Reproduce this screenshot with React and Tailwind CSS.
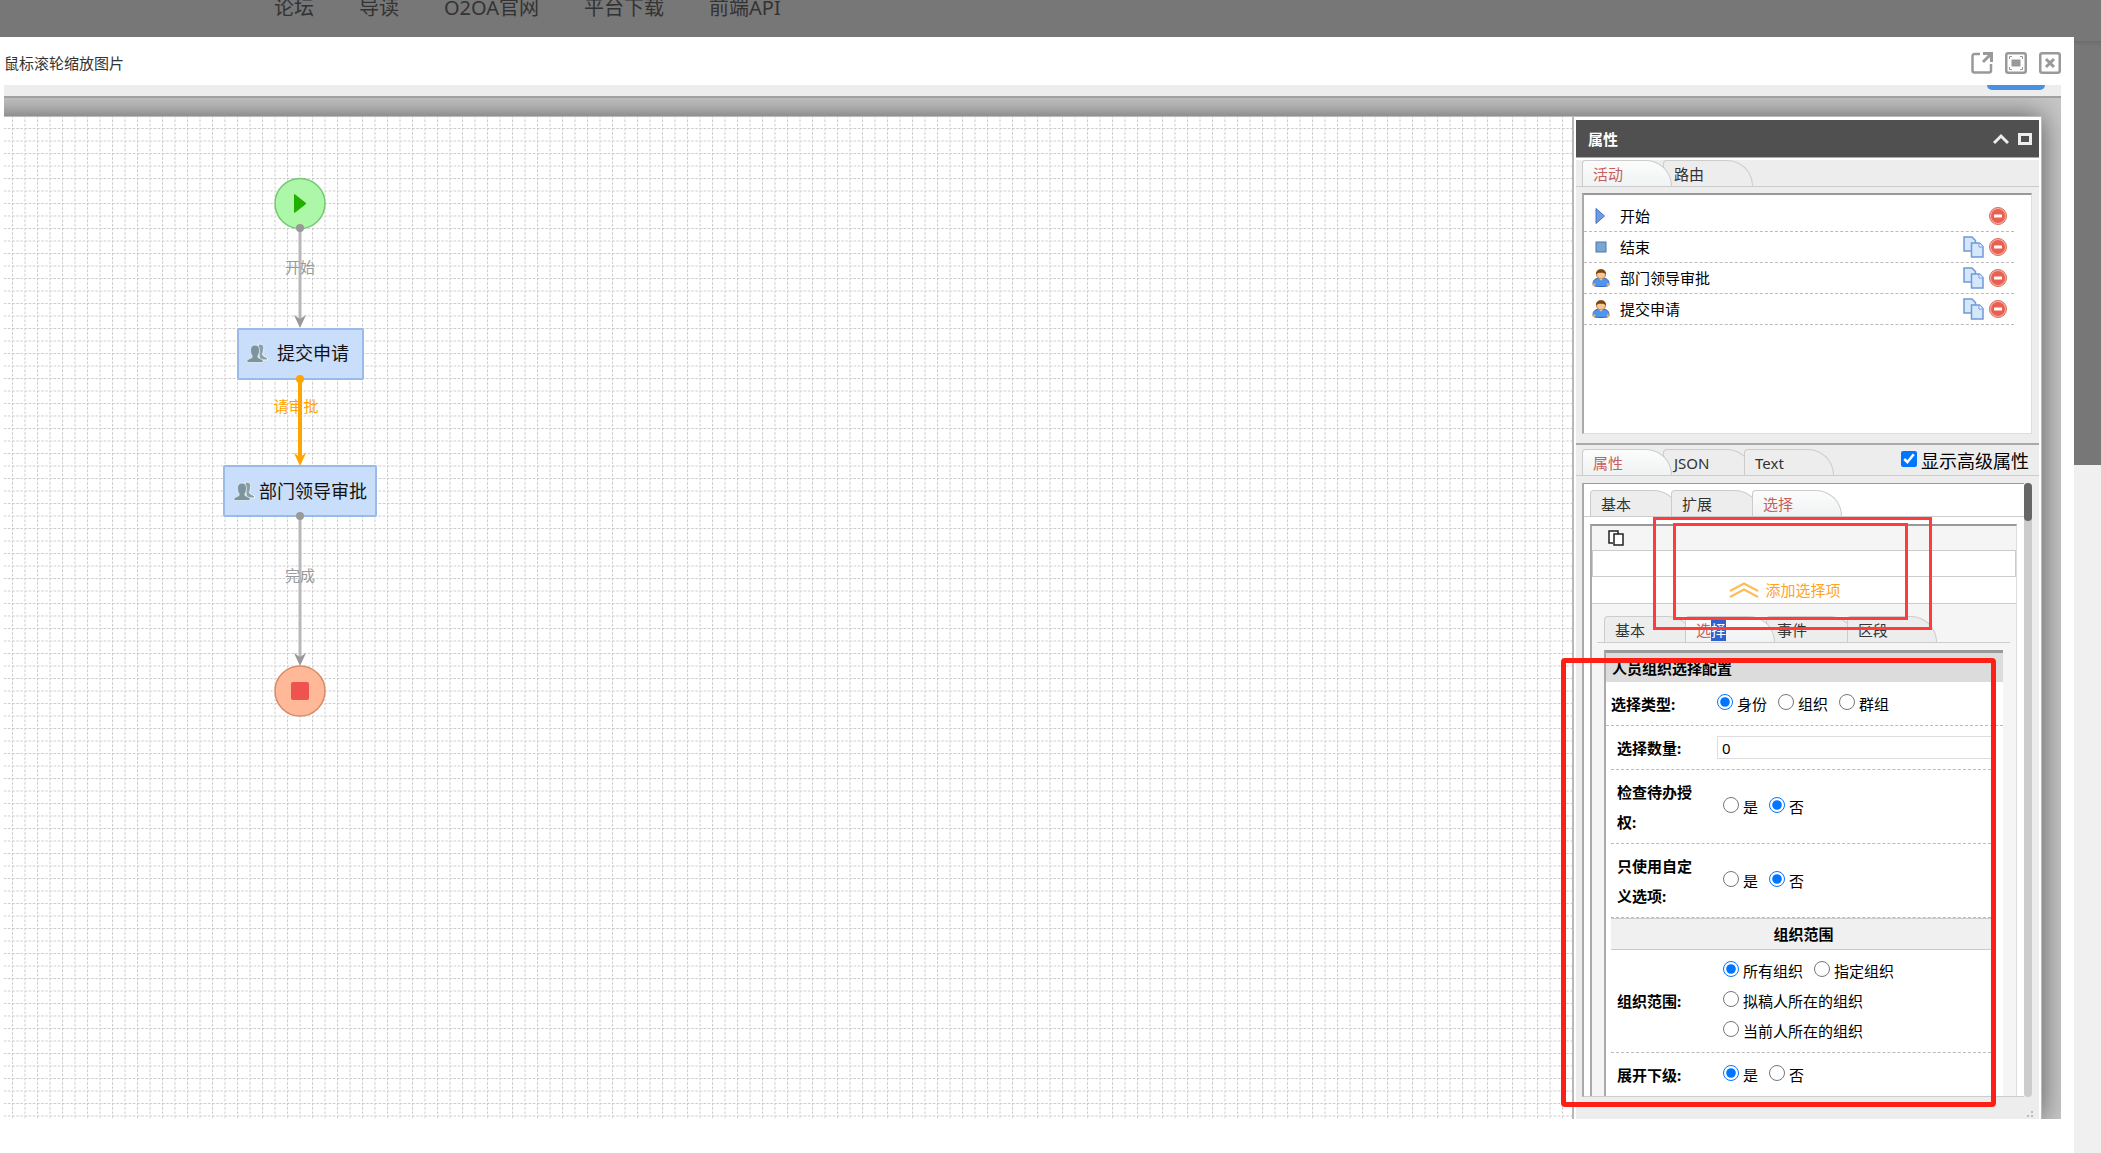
import { useState } from 'react';
import clsx from 'clsx';

const NAV_LINKS = ['论坛', '导读', 'O2OA官网', '平台下载', '前端API'];

const ACTIVITIES = [
  { name: '开始', type: 'begin', copy: false },
  { name: '结束', type: 'end', copy: true },
  { name: '部门领导审批', type: 'manual', copy: true },
  { name: '提交申请', type: 'manual', copy: true },
];

/* ---------- icons ---------- */

function OpenIcon() {
  return (
    <svg width="22" height="22" viewBox="0 0 22 22" fill="none" stroke="#999" strokeWidth="2.500">
      <path d="M9 2H3.500a2 2 0 0 0-2 2v14.500a2 2 0 0 0 2 2H18a2 2 0 0 0 2-2V12" />
      <path d="M12 1.500h8.500V10M20 2l-8 8" strokeWidth="3" />
    </svg>
  );
}

function FullIcon() {
  return (
    <svg width="22" height="22" viewBox="0 0 22 22" fill="none" stroke="#999">
      <rect x="1.250" y="1.250" width="19.500" height="19.500" rx="2" strokeWidth="2.500" />
      <path d="M4.500 7V4.500H7M15 4.500h2.500V7M17.500 15v2.500H15M7 17.500H4.500V15" />
      <rect x="6.500" y="7.500" width="9" height="7" fill="#999" stroke="none" />
    </svg>
  );
}

function CloseIcon() {
  return (
    <svg width="22" height="22" viewBox="0 0 22 22" fill="none" stroke="#999">
      <rect x="1.250" y="1.250" width="19.500" height="19.500" rx="2" strokeWidth="2.500" />
      <path d="M7 7l8 8M15 7l-8 8" strokeWidth="3" />
    </svg>
  );
}

function ActivityIcon({ type }) {
  if (type === 'begin') {
    return (
      <svg width="18" height="18" viewBox="0 0 18 18">
        <path d="M4 1.500L12.500 9L4 16.500Z" fill="#6f9be4" stroke="#3f6fc4" />
      </svg>
    );
  }
  if (type === 'end') {
    return (
      <svg width="18" height="18" viewBox="0 0 18 18">
        <rect x="4" y="4" width="10" height="10" fill="#7ba5d2" stroke="#4a78ac" />
      </svg>
    );
  }
  return (
    <svg width="18" height="18" viewBox="0 0 18 18">
      <path d="M1 15c0-4 2-6 8-6s8 2 8 6c0 2-2 2.500-8 2.500S1 17 1 15z" fill="#4f94ee" stroke="#2f68c0" />
      <circle cx="2" cy="15.500" r="1.500" fill="#e8a860" />
      <circle cx="16" cy="15.500" r="1.500" fill="#e8a860" />
      <path d="M6.500 9h5L9 11.500z" fill="#fff" />
      <ellipse cx="9" cy="5.500" rx="4.500" ry="4.500" fill="#f7c792" stroke="#a8682c" strokeWidth="0.800" />
      <path d="M4 6C3.500 2 6 .2 9 .2s5.500 1.800 5 5.800c-1-1.800-2-2.200-5-2.200S5 4.200 4 6z" fill="#7c4510" />
    </svg>
  );
}

function CopyIcon() {
  return (
    <svg width="21" height="22" viewBox="0 0 21 22" fill="#d5e7fb" stroke="#6f99d8" strokeWidth="1.500">
      <path d="M1 1h8l3.500 3.500V15H1z" />
      <path d="M8.500 7h8l3.500 3.500V21H8.500z" />
      <path d="M16 7v4h4" fill="#fff" strokeWidth="1" />
    </svg>
  );
}

function RemoveIcon() {
  return (
    <svg width="18" height="18" viewBox="0 0 18 18">
      <circle cx="9" cy="9" r="8.500" fill="#f6b0a6" stroke="#dc6a5b" />
      <circle cx="9" cy="9" r="7" fill="#ea5f4f" />
      <rect x="5" y="7.500" width="8" height="3" rx="0.500" fill="#fff" />
    </svg>
  );
}

/* ---------- flow canvas ---------- */

function People({ x, y }) {
  return (
    <g transform={`translate(${x} ${y})`}>
      <path
        d="M11 .5c5-1.500 6.500 1.500 5.500 6 0 2.500-2 3.500-.5 5l4.500 2.500v2h-8z"
        fill="#8ba1aa"
        stroke="#eef4f6"
      />
      <path
        d="M0 18.500v-2.500l5-2.500c1-1.500-1.500-3-1.500-6.500C3.500 3 5 1 8 1s4.500 2 4.500 6c0 3.500-2.500 5-1.500 6.500l5 2.500v2.500z"
        fill="#7b949e"
        stroke="#e4edf0"
        strokeWidth="0.800"
      />
    </g>
  );
}

function Route({ from, to, label, labelX = 296, labelY, active }) {
  const line = active ? '#ffa500' : '#b8b8b8';
  const head = active ? '#ffa500' : '#999';
  return (
    <g>
      <path d={`M296 ${from}V${to - 8}`} stroke={line} strokeWidth={active ? 4 : 3} />
      <circle cx="296" cy={from} r="4" fill={head} />
      <path d={`M296 ${to}l-6 -13l6 4l6 -4z`} fill={head} />
      <text x={labelX} y={labelY} fill={head} fontSize="15" textAnchor="middle" dominantBaseline="central">
        {label}
      </text>
    </g>
  );
}

function FlowCanvas() {
  return (
    <svg className="absolute inset-0 h-full w-full">
      <defs>
        <pattern id="grid" x="8" y="11" width="12.5" height="12.5" patternUnits="userSpaceOnUse">
          <path
            d="M0 .5H12.500M.5 0V12.500"
            stroke="#c8c8c8"
            strokeWidth="1"
            strokeDasharray="2.500 1.667"
          />
        </pattern>
      </defs>
      <rect width="100%" height="100%" fill="url(#grid)" />

      <circle cx="296" cy="86.500" r="25" fill="#adf7a9" stroke="#74c871" strokeWidth="1.500" />
      <path d="M290.500 77.500L302 86.500L290.500 95.500Z" fill="#21b000" stroke="#21b000" strokeLinejoin="round" />

      <rect x="234" y="212" width="125" height="50" rx="1" fill="#c9defb" stroke="#9abbea" strokeWidth="2" />
      <People x={243} y={227} />
      <text x="273" y="236" fontSize="18" fill="#111" dominantBaseline="central">提交申请</text>

      <rect x="220" y="349" width="152" height="50" rx="1" fill="#c9defb" stroke="#9abbea" strokeWidth="2" />
      <People x={230} y={365} />
      <text x="255" y="374" fontSize="18" fill="#111" dominantBaseline="central">部门领导审批</text>

      <circle cx="296" cy="574" r="25" fill="#ffb898" stroke="#d98a66" strokeWidth="1.500" />
      <rect x="287" y="565" width="18" height="18" rx="2" fill="#ee534f" />

      <Route from={111} to={211} label="开始" labelY={150} />
      <Route from={262} to={349} label="请审批" labelX={292} labelY={289} active />
      <Route from={399} to={549} label="完成" labelY={458} />
    </svg>
  );
}

/* ---------- property panel ---------- */

function Tabs({ items, initial, className, renderLabel }) {
  const [current, setCurrent] = useState(initial);
  return (
    <div role="tablist" className={clsx('flex border-b border-[#ccc]', className)}>
      {items.map((item) => (
        <button
          key={item}
          type="button"
          role="tab"
          aria-selected={item === current}
          onClick={() => setCurrent(item)}
          className={clsx(
            'relative -mr-[9px] h-[26px] w-[90px] rounded-tl-[4px] rounded-tr-[26px] border border-b-0 border-[#ccc] pl-[10px] text-left leading-[26px]',
            item === current
              ? 'z-10 bg-linear-to-b from-[#fcfcfc] to-[#f0f3f3] text-[#c4605f]'
              : 'bg-[#ededed] text-[#333]'
          )}
        >
          {renderLabel ? renderLabel(item) : item}
        </button>
      ))}
    </div>
  );
}

function ActivityRow({ activity }) {
  return (
    <li className="mr-[17px] flex h-[31px] items-center border-b border-dashed border-[#bbb] pl-2">
      <ActivityIcon type={activity.type} />
      <span className="ml-[10px] flex-1">{activity.name}</span>
      <span className="flex items-center gap-[5px] pr-[7px]">
        {activity.copy && (
          <button type="button" aria-label="复制">
            <CopyIcon />
          </button>
        )}
        <button type="button" aria-label="删除">
          <RemoveIcon />
        </button>
      </span>
    </li>
  );
}

function RadioGroup({ name, options, initial, className }) {
  const [value, setValue] = useState(initial);
  return (
    <div role="radiogroup" className={clsx('flex flex-wrap gap-x-[11px]', className)}>
      {options.map((option) => (
        <label key={option} className="flex items-center gap-1 leading-[30px]">
          <input
            type="radio"
            name={name}
            checked={value === option}
            onChange={() => setValue(option)}
            className="mb-1 h-4 w-4 accent-[#0075ff]"
          />
          {option}
        </label>
      ))}
    </div>
  );
}

function Field({ label, htmlFor, className, children }) {
  return (
    <div className={clsx('flex items-center border-b border-dashed border-[#bbb]', className)}>
      <label htmlFor={htmlFor} className="w-[106px] shrink-0 pr-4 pl-[6px] leading-[30px] font-bold">
        {label}
      </label>
      {children}
    </div>
  );
}

function SelectConfig() {
  return (
    <div className="mt-[7px] mr-[13px] ml-3 flex-1 border-t-3 border-l-2 border-t-[#999] border-l-[#aaa] bg-white">
      <h3 className="h-[29px] bg-[#dcdcdc] pl-[6px] leading-[31px] font-bold">人员组织选择配置</h3>
      <div className="flex h-[44px] items-center border-b border-dashed border-[#bbb] pl-[5px]">
        <span className="w-[106px] shrink-0 font-bold">选择类型:</span>
        <RadioGroup name="selectType" options={['身份', '组织', '群组']} initial="身份" />
      </div>

      <div className="mr-[7px] ml-[5px]">
        <Field label="选择数量:" htmlFor="selectCount" className="h-[44px]">
          <input
            id="selectCount"
            type="text"
            defaultValue="0"
            className="h-[23px] min-w-0 flex-1 border border-[#ddd] pl-1"
          />
        </Field>
        <Field label="检查待办授权:" className="h-[74px]">
          <RadioGroup name="checkEmpower" options={['是', '否']} initial="否" className="ml-[6px]" />
        </Field>
        <Field label="只使用自定义选项:" className="h-[74px]">
          <RadioGroup name="customOnly" options={['是', '否']} initial="否" className="ml-[6px]" />
        </Field>
        <h4 className="h-8 border-y border-[#ccc] bg-[#f0f0f0] text-center leading-[31px] font-bold">组织范围</h4>
        <Field label="组织范围:" className="h-[103px]">
          <RadioGroup
            name="unitRange"
            options={['所有组织', '指定组织', '拟稿人所在的组织', '当前人所在的组织']}
            initial="所有组织"
            className="ml-[6px] w-[200px]"
          />
        </Field>
        <Field label="展开下级:" className="h-[44px]">
          <RadioGroup name="expandSub" options={['是', '否']} initial="是" className="ml-[6px]" />
        </Field>
      </div>
    </div>
  );
}

function PropertyPanel() {
  const [advanced, setAdvanced] = useState(true);
  return (
    <aside className="flex w-[469px] shrink-0 flex-col border-l-2 border-[#b8b8b8] bg-white px-[2px] pt-[3px] text-[15px] leading-[22px] text-black">
      <header className="flex h-[38px] shrink-0 items-center border-b border-[#aaa] bg-[#505050] pr-[7px] pl-3 text-white">
        <h2 className="flex-1 font-bold">属性</h2>
        <button type="button" aria-label="折叠" className="mr-[9px]">
          <svg width="16" height="12" viewBox="0 0 16 12" fill="none" stroke="#eee" strokeWidth="3">
            <path d="M1 10l7-7l7 7" />
          </svg>
        </button>
        <button type="button" aria-label="最大化">
          <svg width="14" height="12" viewBox="0 0 14 12" fill="none" stroke="#eee" strokeWidth="3">
            <rect x="1.500" y="1.500" width="11" height="9" />
          </svg>
        </button>
      </header>

      <div className="relative mt-[2px] flex min-h-0 flex-1 flex-col bg-[#ededed]">
        <Tabs items={['活动', '路由']} initial="活动" className="pl-[6px]" />
        <ul className="mr-[7px] ml-[6px] mt-[6px] h-[241px] shrink-0 border border-t-2 border-l-2 border-[#ddd] border-t-[#999] border-l-[#aaa] bg-white pt-[6px]">
          {ACTIVITIES.map((activity) => (
            <ActivityRow key={activity.name} activity={activity} />
          ))}
        </ul>

        <div className="relative mt-[9px] border-t-2 border-[#aaa] pt-1">
          <Tabs items={['属性', 'JSON', 'Text']} initial="属性" className="pl-[6px]" />
          <label className="absolute top-[3px] right-[10px] z-20 flex items-center gap-1 text-[18px] leading-[26px]">
            <input
              type="checkbox"
              checked={advanced}
              onChange={(e) => setAdvanced(e.target.checked)}
              className="mb-1 h-4 w-4 accent-[#0075ff]"
            />
            显示高级属性
          </label>
        </div>

        <div className="mr-[7px] ml-[6px] mt-[7px] mb-[22px] flex min-h-0 flex-1">
          <div className="flex min-w-0 flex-1 flex-col overflow-hidden border-t border-b border-l-2 border-[#ccc] border-t-[#999] border-l-[#aaa] bg-white pt-[6px]">
            <Tabs items={['基本', '扩展', '选择']} initial="选择" className="pl-[6px]" />
            <div className="mt-[7px] mr-[7px] ml-[6px] flex min-h-0 flex-1 flex-col border-t-2 border-r border-l-2 border-[#ddd] border-t-[#999] border-l-[#aaa] bg-[#f5f5f5]">
              <div className="flex h-6 shrink-0 items-center pl-4">
                <button type="button" aria-label="复制配置">
                  <svg width="16" height="16" viewBox="0 0 16 16" fill="#fff" stroke="#222" strokeWidth="1.500">
                    <path d="M5 13H1V1h9v3" />
                    <rect x="6" y="4" width="9" height="11" />
                  </svg>
                </button>
              </div>
              <input
                type="text"
                aria-label="选择项"
                className="h-[27px] shrink-0 border border-[#ccc] bg-white px-1"
              />
              <button
                type="button"
                className="flex h-[27px] shrink-0 items-center justify-center gap-[6px] border-b border-[#ccc] bg-white pr-[38px] text-[#ffa21f]"
              >
                <svg width="30" height="16" viewBox="0 0 30 16" fill="none" stroke="#ffbc55" strokeWidth="2">
                  <path d="M1 9L15 1.500L29 9" />
                  <path d="M1 15L15 7.500L29 15" />
                </svg>
                添加选择项
              </button>
              <Tabs
                items={['基本', '选择', '事件', '区段']}
                initial="选择"
                className="mt-3 mr-[6px] ml-[5px] shrink-0 pl-[7px]"
                renderLabel={(item) =>
                  item === '选择' ? (
                    <>
                      选<span className="inline-block h-[22px] bg-[#2f62cf] leading-[22px] text-white">择</span>
                    </>
                  ) : (
                    item
                  )
                }
              />
              <SelectConfig />
            </div>
          </div>
          {/* scroll bar */}
          <div className="w-2 shrink-0 rounded-full bg-[#ccc]">
            <div className="h-[38px] rounded-full bg-[#666]" />
          </div>
        </div>

        {/* resize grip */}
        <svg className="absolute right-[5px] bottom-0" width="8" height="8" viewBox="0 0 8 8" fill="#bbb">
          <rect x="5" y="0" width="2" height="2" />
          <rect x="1" y="4" width="2" height="2" />
          <rect x="5" y="4" width="2" height="2" />
        </svg>
      </div>
    </aside>
  );
}

/* ---------- page ---------- */

export default function App() {
  return (
    <div className='flex h-screen flex-col overflow-hidden bg-[#f0f0f0] font-["Noto_Sans","Noto_Sans_CJK_SC",sans-serif]'>
      <nav className="flex h-[37px] shrink-0 gap-[45px] overflow-hidden bg-[#777] pl-[274px] text-[20px] leading-4 text-[#333]">
        {NAV_LINKS.map((link) => (
          <a key={link} href="#" className="whitespace-nowrap">
            {link}
          </a>
        ))}
      </nav>

      <div className="flex min-h-0 flex-1">
        <main className="flex min-w-0 flex-1 flex-col bg-white pr-[13px] pb-[34px] pl-1">
          <div className="flex h-12 shrink-0 items-center text-[15px] text-[#333]">
            <span className="flex-1 pt-1">鼠标滚轮缩放图片</span>
            <span className="flex gap-3 pt-1">
              <button type="button" aria-label="新窗口打开">
                <OpenIcon />
              </button>
              <button type="button" aria-label="实际大小">
                <FullIcon />
              </button>
              <button type="button" aria-label="关闭">
                <CloseIcon />
              </button>
            </span>
          </div>

          <div className="relative flex min-h-0 flex-1 flex-col overflow-hidden">
            <div className="flex h-[13px] shrink-0 items-start justify-end border-b-2 border-[#a0a2a0] bg-[#ededed] pr-4">
              <div className="h-[5px] w-[58px] rounded-b-[16px] bg-[#4a90e2]" />
            </div>
            <div className="flex min-h-0 flex-1 overflow-hidden bg-[#c6c6c6] pt-[18px] pr-[19px]">
              <div className="-ml-10 flex min-w-0 flex-1 border-t border-r border-[#bbb] bg-white pl-10 shadow-[0_0_26px_rgba(0,0,0,0.55)]">
                <section className="relative min-w-0 flex-1">
                  <FlowCanvas />
                </section>
                <PropertyPanel />
              </div>
            </div>

            {/* red marks over the dialog */}
            <div className="pointer-events-none absolute top-[432px] right-[129px] z-30 h-[113px] w-[279px] border-3 border-[#ff3b3b]" />
            <div className="pointer-events-none absolute top-[438px] right-[153px] z-30 h-[97px] w-[235px] border-3 border-[#ff3b3b]" />
            <div className="pointer-events-none absolute top-[573px] right-[65px] bottom-3 z-30 w-[435px] rounded-[4px] border-5 border-[#ff2015]" />
          </div>
        </main>

        <div className="flex w-[27px] shrink-0 flex-col bg-[#f0f0f0]">
          <div className="h-[428px] bg-[#777] pt-1">
            <div className="h-[5px] bg-linear-to-b from-[#6c6c6c] to-[#777]" />
          </div>
        </div>
      </div>
    </div>
  );
}
